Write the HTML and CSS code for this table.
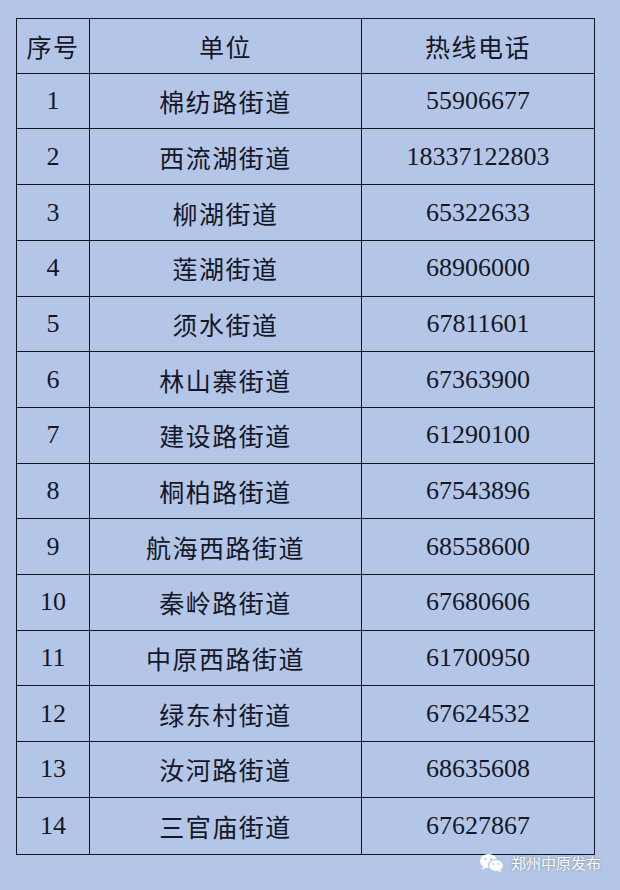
FILE: index.html
```html
<!DOCTYPE html>
<html lang="zh-CN">
<head>
<meta charset="utf-8">
<title>街道热线电话</title>
<link rel="stylesheet" href="styles.css">
</head>
<body>
<div class="page">
  <table class="hotline">
    <colgroup>
      <col class="c-no">
      <col class="c-unit">
      <col class="c-tel">
    </colgroup>
    <thead>
      <tr><th class="cjk">序号</th><th class="cjk">单位</th><th class="cjk">热线电话</th></tr>
    </thead>
    <tbody>
      <tr><td class="num">1</td><td class="cjk">棉纺路街道</td><td class="num">55906677</td></tr>
      <tr><td class="num">2</td><td class="cjk">西流湖街道</td><td class="num">18337122803</td></tr>
      <tr><td class="num">3</td><td class="cjk">柳湖街道</td><td class="num">65322633</td></tr>
      <tr><td class="num">4</td><td class="cjk">莲湖街道</td><td class="num">68906000</td></tr>
      <tr><td class="num">5</td><td class="cjk">须水街道</td><td class="num">67811601</td></tr>
      <tr><td class="num">6</td><td class="cjk">林山寨街道</td><td class="num">67363900</td></tr>
      <tr><td class="num">7</td><td class="cjk">建设路街道</td><td class="num">61290100</td></tr>
      <tr><td class="num">8</td><td class="cjk">桐柏路街道</td><td class="num">67543896</td></tr>
      <tr><td class="num">9</td><td class="cjk">航海西路街道</td><td class="num">68558600</td></tr>
      <tr><td class="num">10</td><td class="cjk">秦岭路街道</td><td class="num">67680606</td></tr>
      <tr><td class="num">11</td><td class="cjk">中原西路街道</td><td class="num">61700950</td></tr>
      <tr><td class="num">12</td><td class="cjk">绿东村街道</td><td class="num">67624532</td></tr>
      <tr><td class="num">13</td><td class="cjk">汝河路街道</td><td class="num">68635608</td></tr>
      <tr><td class="num">14</td><td class="cjk">三官庙街道</td><td class="num">67627867</td></tr>
    </tbody>
  </table>
  <div class="mark">
    <svg class="mark-icon" width="26" height="20" viewBox="0 0 26 20">
      <ellipse cx="9.5" cy="8" rx="8.5" ry="7" fill="#fff"/>
      <path d="M4 13 L3 17 L8 14 Z" fill="#fff"/>
      <ellipse cx="17" cy="12.5" rx="7.5" ry="6" fill="#fff" stroke="#b4c6e7" stroke-width="1.2"/>
      <path d="M21 17 L23 19.5 L18.5 18 Z" fill="#fff"/>
      <circle cx="6.5" cy="6" r="1.1" fill="#b4c6e7"/>
      <circle cx="12" cy="6" r="1.1" fill="#b4c6e7"/>
      <circle cx="14.5" cy="11" r="0.9" fill="#b4c6e7"/>
      <circle cx="19.5" cy="11" r="0.9" fill="#b4c6e7"/>
    </svg>
    <span class="mark-text">郑州中原发布</span>
  </div>
</div>
</body>
</html>
```

FILE: styles.css
```css
html, body {
  margin: 0;
  padding: 0;
  background: #b4c6e7;
}
.page {
  position: relative;
  width: 620px;
  height: 890px;
  padding: 18px 0 0 16px;
  box-sizing: border-box;
}
.hotline {
  border-collapse: collapse;
  width: 578px;
  table-layout: fixed;
  color: #151727;
}
.c-no { width: 73px; }
.c-unit { width: 272px; }
.c-tel { width: 233px; }
.hotline th, .hotline td {
  border: 1.3px solid #121420;
  height: 54.7px;
  padding: 0;
  text-align: center;
  vertical-align: middle;
  font-weight: normal;
}
.hotline th { height: 53.8px; }
.hotline tbody tr:last-child td { height: 56.6px; }
.cjk {
  font-family: "Noto Sans CJK SC", sans-serif;
  font-size: 25px;
  letter-spacing: 1.5px;
  font-weight: 300;
}
.num {
  font-family: "Liberation Serif", serif;
  font-size: 26px;
  padding-top: 2px;
}
.mark {
  position: absolute;
  left: 479px;
  top: 852px;
  display: flex;
  align-items: center;
  gap: 6px;
}
.mark-icon { display: block; }
.mark-text {
  font-family: "Noto Sans CJK SC", sans-serif;
  font-size: 15px;
  color: #fff;
  letter-spacing: 0;
  text-shadow: 0 0 2px rgba(60, 70, 90, 0.6);
}
```
